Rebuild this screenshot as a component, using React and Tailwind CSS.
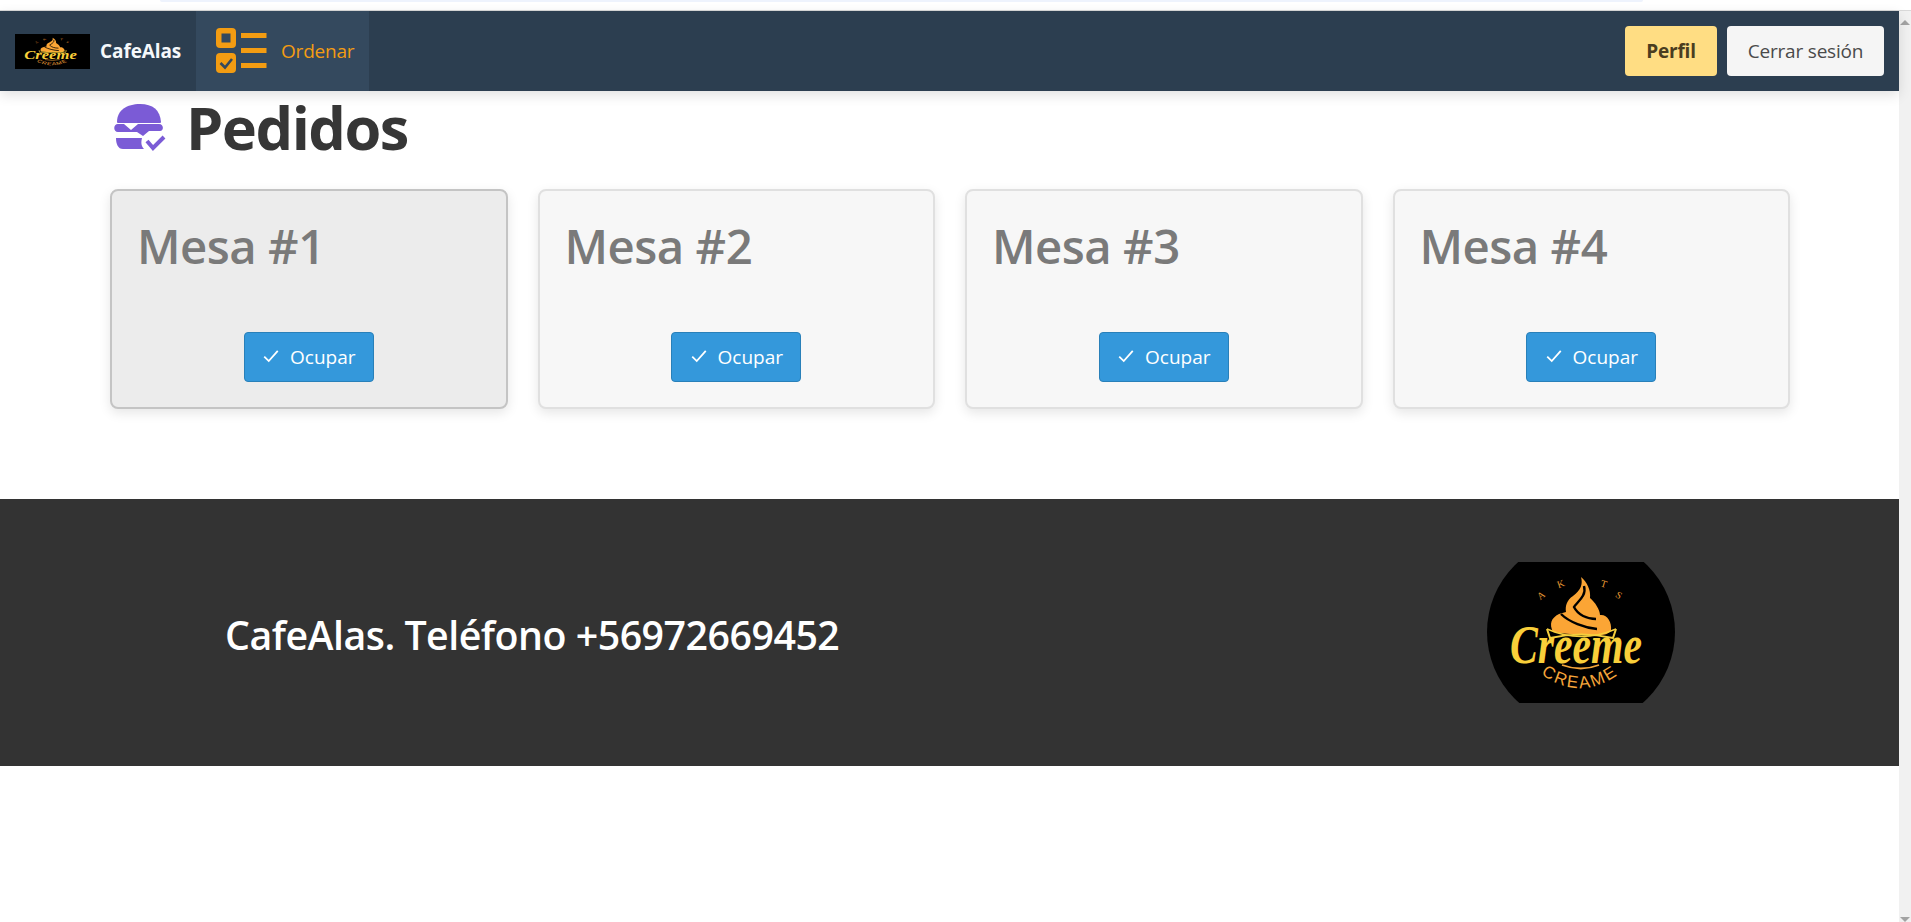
import React from "react";

const font = { fontFamily: '"Open Sans", "Noto Sans", sans-serif' };

function Logo({ className, stretch = false, circle = true }) {
  const ornament = [
    ["A", 56, 36, -38],
    ["K", 75, 25, -20],
    ["T", 116, 25, 16],
    ["S", 130, 36, 32],
  ];
  return (
    <svg viewBox="0 0 188 141" preserveAspectRatio={stretch ? "none" : "xMidYMid meet"} className={className} aria-hidden="true">
      <defs>
        <path id="creamArc" d="M36 96 Q93 156 150 96" fill="none" />
      </defs>
      {circle && <circle cx="94" cy="70" r="94" fill="#000" />}
      <path d="M94 15 C100 20 104 28 103 36 C108 40 113 48 113 53 C120 52 125 60 124 68 C122 72 118 73 112 73 C95 73 75 72 66 70 C62 62 64 56 72 52 L79 50 C78 44 80 38 86 34 C94 28 96 22 94 15 Z" fill="#fba535" />
      <path d="M74 52 C82 60 98 66 110 67" fill="none" stroke="#000" strokeWidth="2.4" />
      <path d="M97 24 C100 34 90 40 87 45 C91 53 100 57 109 57" fill="none" stroke="#000" strokeWidth="2.4" />
      <path d="M60 67 L63 76 Q94 69 126 76 L129 67" fill="none" stroke="#f6cf3d" strokeWidth="2" />
      <path d="M60 67 Q94 82 129 67" fill="none" stroke="#f6cf3d" strokeWidth="1.4" />
      {ornament.map(([c, x, y, r]) => (
        <text key={c} x="0" y="0" transform={`translate(${x} ${y}) rotate(${r})`} textAnchor="middle" fill="#e69a33" style={{ fontFamily: '"Liberation Serif", serif', fontSize: 10 }}>{c}</text>
      ))}
      <text x="23" y="101" fill="#f9cf3a" textLength="132" lengthAdjust="spacingAndGlyphs" style={{ fontFamily: '"Liberation Serif", serif', fontStyle: "italic", fontWeight: 700, fontSize: 54 }}>Creeme</text>
      <path d="M75 103 Q94 110 112 103" fill="none" stroke="#f5a53a" strokeWidth="1.8" />
      <text fill="#f5a53a" style={{ fontFamily: '"Liberation Sans", sans-serif', fontSize: 17, letterSpacing: 2 }}>
        <textPath href="#creamArc" startOffset="50%" textAnchor="middle">CREAME</textPath>
      </text>
    </svg>
  );
}

function OrderIcon() {
  return (
    <svg viewBox="0 0 52 46" className="w-[52px] h-[46px]" aria-hidden="true">
      <rect x="0" y="0" width="20" height="20" rx="4" fill="#f39c12" />
      <rect x="5.5" y="5.5" width="9" height="9" fill="#34495e" />
      <rect x="0" y="25" width="20" height="20" rx="4" fill="#f39c12" />
      <path d="M4.5 35 L9 39.5 L16 31" fill="none" stroke="#34495e" strokeWidth="2.6" />
      <rect x="25" y="5" width="25.5" height="5" fill="#f39c12" />
      <rect x="25" y="20" width="25.5" height="5" fill="#f39c12" />
      <rect x="25" y="35" width="25.5" height="5" fill="#f39c12" />
    </svg>
  );
}

function BurgerIcon() {
  return (
    <svg viewBox="0 0 52 48" className="w-[52px] h-[48px] mt-[2px]" aria-hidden="true">
      <path d="M3 18 C3 6 13 0 26 0 C39 0 46 6 47 18 C47 19 46 19 45 19 L5 19 C4 19 3 19 3 18 Z" fill="#7b5bd6" />
      <path d="M4 20 L10 20 L17 26 L24 20 L45 20 C50 20 50 27 46 27 L35 27 L29 32 L23 28 L4 28 C-1 28 -1 20 4 20 Z" fill="#7b5bd6" />
      <path d="M2 34 L28 34 C27 38 27 42 30 45 L9 45 C4 45 2 40 2 34 Z" fill="#7b5bd6" />
      <path d="M33 37 L39 44 L50 33" fill="none" stroke="#7b5bd6" strokeWidth="4" />
    </svg>
  );
}

function MesaCard({ n, hovered }) {
  return (
    <div className={`h-[220px] rounded-lg border-2 shadow-[0_4px_12px_rgba(0,0,0,0.1)] flex flex-col items-center pb-[25px] ${hovered ? "bg-[#ececec] border-[#c4c4c4]" : "bg-[#f7f7f7] border-[#e0e0e0]"}`}>
      <h2 className="self-start pl-[25px] pt-[23px] text-[47.3px] leading-[64px] font-semibold text-[#7a7a7a] tracking-[-0.5px] whitespace-nowrap">Mesa #{n}</h2>
      <button className="mt-auto h-[50px] w-[130px] rounded bg-[#3498db] border border-[#2980b9] text-white text-[19px] flex items-center justify-center gap-[10px]">
        <svg viewBox="0 0 16 16" className="w-[18px] h-[18px] -mt-[2px]" aria-hidden="true"><path d="M2 8.5 L6 12.5 L14 3.5" fill="none" stroke="#fff" strokeWidth="1.6" /></svg>
        <span>Ocupar</span>
      </button>
    </div>
  );
}

export default function App() {
  return (
    <div className="h-[922px] w-full overflow-hidden bg-white flex flex-col" style={font}>
      <div className="h-[10px] shrink-0 pl-[160px] pr-[268px]">
        <div className="h-[2px] bg-[#eef3fd] rounded-b-md" />
      </div>
      <div className="flex-1 flex min-h-0 border-t border-[#d9d9d9]">
        <div className="flex-1 min-w-0 flex flex-col">
          <nav className="relative z-10 h-[80px] shrink-0 bg-[#2c3e50] shadow-[0_4px_12px_rgba(0,0,0,0.12)] flex items-stretch pr-[15px]">
            <div className="flex items-center pl-[15px] w-[196px]">
              <div className="w-[75px] h-[35px] bg-black overflow-hidden">
                <Logo className="w-[75px] h-[35px]" stretch circle={false} />
              </div>
              <span className="ml-[10px] text-[19px] font-bold text-[#f5f8fb] tracking-[-0.1px]">CafeAlas</span>
            </div>
            <div className="w-[173px] bg-[#34495e] flex items-center pl-[20px]">
              <OrderIcon />
              <span className="ml-[13px] text-[19px] text-[#f39c12] tracking-[-0.2px]">Ordenar</span>
            </div>
            <div className="ml-auto flex items-center gap-[10px]">
              <button className="h-[50px] w-[92px] rounded bg-[#ffdd83] text-[#4a3d20] text-[19px] font-bold tracking-[-0.2px]">Perfil</button>
              <button className="h-[50px] w-[157px] rounded bg-[#f5f5f5] text-[#4a4a4a] text-[19px] tracking-[-0.2px]">Cerrar sesión</button>
            </div>
          </nav>
          <main className="pl-[110px] pr-[109px] h-[408px] shrink-0">
            <div className="flex items-center h-[75px] pl-[4px] gap-[20px] -mt-[2px]">
              <BurgerIcon />
              <h1 className="text-[59.5px] font-bold text-[#363636] leading-none tracking-[-1.5px]">Pedidos</h1>
            </div>
            <div className="grid grid-cols-4 gap-[30px] mt-[25px]">
              <MesaCard n={1} hovered />
              <MesaCard n={2} />
              <MesaCard n={3} />
              <MesaCard n={4} />
            </div>
          </main>
          <footer className="h-[267px] shrink-0 bg-[#333333] flex items-center">
            <p className="ml-[225px] mt-[5px] text-[39.3px] font-semibold text-white tracking-[-0.5px] whitespace-nowrap">CafeAlas. Teléfono +56972669452</p>
            <div className="ml-auto mr-[224px] w-[188px] h-[141px] overflow-hidden">
              <Logo className="w-[188px] h-[141px]" />
            </div>
          </footer>
        </div>
        <div className="w-[12px] shrink-0 bg-[#f1f1f1] flex flex-col items-center justify-between pt-[9px]">
          <div className="w-0 h-0 border-l-[5px] border-r-[5px] border-b-[5px] border-l-transparent border-r-transparent border-b-[#a3a3a3]" />
          <div className="w-0 h-0 border-l-[5px] border-r-[5px] border-t-[5px] border-l-transparent border-r-transparent border-t-[#a3a3a3]" />
        </div>
      </div>
    </div>
  );
}
